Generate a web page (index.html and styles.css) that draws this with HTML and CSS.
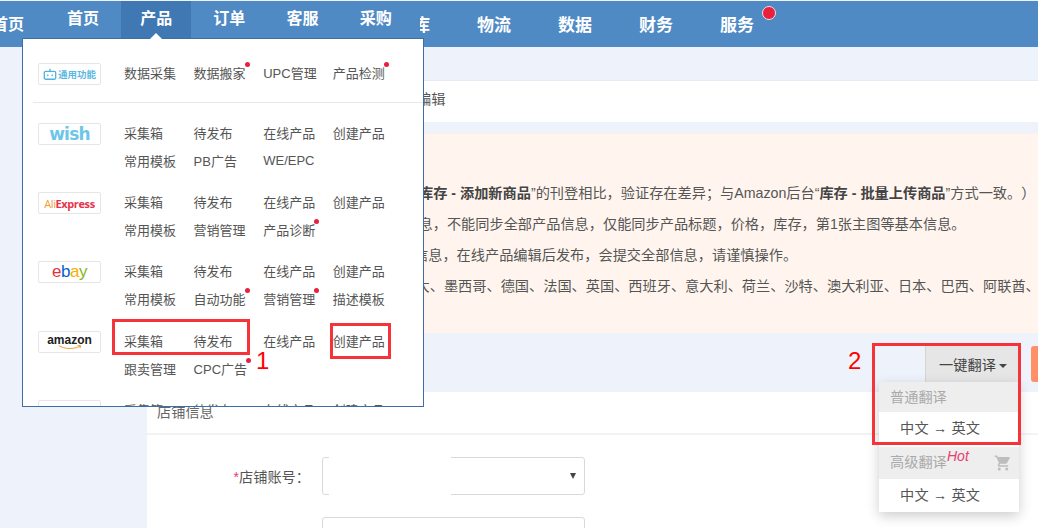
FILE: index.html
```html
<!DOCTYPE html>
<html lang="zh-CN">
<head>
<meta charset="utf-8">
<title>产品</title>
<link rel="stylesheet" href="styles.css">
</head>
<body>
<div class="page">
  <header class="nav">
    <a class="nav-cut">首页</a>
    <div class="nav-left">
      <a>首页</a>
      <a class="active">产品</a>
      <a>订单</a>
      <a>客服</a>
      <a>采购</a>
    </div>
    <div class="nav-right">
      <a>仓库</a>
      <a>物流</a>
      <a>数据</a>
      <a>财务</a>
      <a class="has-badge">服务</a>
    </div>
  </header>

  <main class="main">
    <div class="crumb"><span>编辑</span></div>
    <section class="notice">
      <p class="l1"><b>库存 - 添加新商品</b>”的刊登相比，验证存在差异；与Amazon后台“<b>库存 - 批量上传商品</b>”方式一致。）</p>
      <p class="l2">息，不能同步全部产品信息，仅能同步产品标题，价格，库存，第1张主图等基本信息。</p>
      <p class="l3">信息，在线产品编辑后发布，会提交全部信息，请谨慎操作。</p>
      <p class="l4">大、墨西哥、德国、法国、英国、西班牙、意大利、荷兰、沙特、澳大利亚、日本、巴西、阿联酋、</p>
    </section>
    <div class="toolbar">
      <div class="translate">
        <button class="btn-translate">一键翻译<i class="caret"></i></button>
        <div class="menu">
          <div class="menu-head">普通翻译</div>
          <div class="menu-item">中文 → 英文</div>
          <div class="menu-head second">高级翻译<em>Hot</em>
            <svg class="cart" viewBox="0 0 24 24" width="18" height="18"><path fill="#bdbdbd" d="M7 18a2 2 0 1 0 0 4 2 2 0 0 0 0-4zM1 2v2h2l3.6 7.6L5.2 14c-.1.3-.2.6-.2 1 0 1.100.9 2 2 2h12v-2H7.400a.25.25 0 0 1-.25-.25l.03-.12L8.100 13h7.450c.75 0 1.410-.41 1.750-1.030L20.880 5.500A1 1 0 0 0 20 4H5.210l-.94-2H1zm16 16a2 2 0 1 0 0 4 2 2 0 0 0 0-4z"/></svg>
          </div>
          <div class="menu-item">中文 → 英文</div>
        </div>
      </div>
      <button class="btn-orange"></button>
    </div>
    <section class="card">
      <div class="card-head">店铺信息</div>
      <div class="form">
        <div class="form-row">
          <label><i>*</i>店铺账号：</label>
          <div class="select"><span class="mask"></span><i class="arrow"></i></div>
        </div>
        <div class="form-row">
          <label></label>
          <div class="select"></div>
        </div>
      </div>
    </section>
  </main>

  <div class="mega">
    <span class="mega-caret"></span>
    <div class="mega-body">
      <div class="row">
        <div class="logo logo-common">
          <svg viewBox="0 0 16 16" width="14" height="14"><path fill="none" stroke="#4fb3e0" stroke-width="1.500" d="M3 5h10a1.500 1.500 0 0 1 1.500 1.500v6a1.500 1.500 0 0 1-1.500 1.500H3a1.500 1.500 0 0 1-1.500-1.500v-6A1.500 1.500 0 0 1 3 5zM8 5V2"/><circle cx="5.500" cy="9.500" r="1" fill="#4fb3e0"/><circle cx="10.500" cy="9.500" r="1" fill="#4fb3e0"/></svg>
          <span>通用功能</span>
        </div>
        <div class="links">
          <a>数据采集</a><a class="dot">数据搬家</a><a>UPC管理</a><a class="dot">产品检测</a>
        </div>
      </div>
      <hr class="divider">
      <div class="row">
        <div class="logo logo-wish">wish</div>
        <div class="links">
          <a>采集箱</a><a>待发布</a><a>在线产品</a><a>创建产品</a>
          <a>常用模板</a><a>PB广告</a><a>WE/EPC</a>
        </div>
      </div>
      <div class="row">
        <div class="logo logo-ali"><span>Ali</span>Express</div>
        <div class="links">
          <a>采集箱</a><a>待发布</a><a>在线产品</a><a>创建产品</a>
          <a>常用模板</a><a>营销管理</a><a class="dot">产品诊断</a>
        </div>
      </div>
      <div class="row row-ebay">
        <div class="logo logo-ebay"><span class="e">e</span><span class="b">b</span><span class="a">a</span><span class="y">y</span></div>
        <div class="links">
          <a>采集箱</a><a>待发布</a><a>在线产品</a><a>创建产品</a>
          <a>常用模板</a><a class="dot">自动功能</a><a class="dot">营销管理</a><a>描述模板</a>
        </div>
      </div>
      <div class="row">
        <div class="logo logo-amazon">amazon
          <svg viewBox="0 0 40 8" width="26" height="5"><path fill="none" stroke="#f0a030" stroke-width="1.600" d="M2 1c10 6 24 6 34 1M32 1h5l-1 4"/></svg>
        </div>
        <div class="links">
          <a>采集箱</a><a>待发布</a><a>在线产品</a><a>创建产品</a>
          <a>跟卖管理</a><a class="dot">CPC广告</a>
        </div>
      </div>
      <div class="row">
        <div class="logo"></div>
        <div class="links">
          <a>采集箱</a><a>待发布</a><a>在线产品</a><a>创建产品</a>
        </div>
      </div>
    </div>
  </div>

  <span class="mark mark-a"></span>
  <span class="mark mark-b"></span>
  <span class="mark mark-c"></span>
  <span class="num num-1">1</span>
  <span class="num num-2">2</span>
</div>
</body>
</html>
```
FILE: styles.css
```css
* { box-sizing: border-box; }
html, body { margin: 0; padding: 0; }
body {
  background: #eef2fa;
  font-family: "Liberation Sans", "Noto Sans CJK SC", sans-serif;
  font-size: 14.200px;
  color: #555;
  text-spacing-trim: space-all;
}
.page { position: relative; width: 1038px; height: 528px; overflow: hidden; }

.nav {
  display: flex;
  height: 46px;
  margin-top: 1px;
  background: #4f8ac5;
  color: #fff;
  font-weight: 700;
  position: relative;
}
.nav a { display: block; }
.nav-cut { position: absolute; z-index: 2; left: -8px; top: 0; font-size: 16px; line-height: 48px; }
.nav-left {
  position: relative;
  z-index: 1;
  flex: none;
  display: flex;
  gap: 3.200px;
  width: 372px;
  margin-left: 48px;
  font-size: 16px;
  background: #4f8ac5;
}
.nav-left a { width: 70px; height: 37px; line-height: 35px; text-align: center; }
.nav-left a.active { background: #3f78b2; }
.nav-right { display: flex; margin-left: -47.500px; font-size: 17px; }
.nav-right a { width: 81px; height: 46px; line-height: 50px; text-align: center; position: relative; }
.has-badge::after {
  content: "";
  position: absolute;
  left: 65px;
  top: 5px;
  width: 12px;
  height: 12px;
  border-radius: 50%;
  background: #e8203c;
  border: 1px solid #f3dfe3;
}

.main { padding-left: 147px; }
.crumb {
  margin-top: 33px;
  height: 42px;
  background: #fff;
  border-top: 1px solid #e6eaf2;
  padding-left: 270px;
  line-height: 36px;
}
.notice {
  margin-top: 11px;
  height: 200px;
  background: #fff5ee;
  border-top: 1px solid #fdf0e6;
  padding-top: 44px;
  white-space: nowrap;
}
.notice p { margin: 0; height: 31px; line-height: 31px; }
.notice b { color: #444; }
.l1 { padding-left: 272px; }
.l2 { padding-left: 271.500px; }
.l3 { padding-left: 267px; }
.l4 { padding-left: 268.500px; }

.toolbar {
  display: flex;
  justify-content: flex-end;
  align-items: flex-start;
  height: 59px;
  padding-top: 13px;
  margin-right: -30px;
}
.translate { position: relative; margin-right: 11px; }
.btn-translate {
  display: block;
  width: 95px;
  height: 36px;
  background: #e6e6e6;
  border: 0;
  border-left: 1px solid #d4d4d4;
  padding: 0;
  font: inherit;
  color: #444;
}
.caret {
  display: inline-block;
  margin-left: 3px;
  vertical-align: middle;
  border: 4px solid transparent;
  border-top-color: #444;
  border-bottom: 0;
}
.btn-orange {
  width: 37px;
  height: 36px;
  background: #ff9068;
  border: 0;
  border-radius: 3px;
}
.menu {
  position: absolute;
  z-index: 3;
  right: 1px;
  top: 36px;
  width: 140px;
  background: #fff;
  box-shadow: 0 4px 12px rgba(0, 0, 0, .2);
}
.menu-head {
  position: relative;
  height: 30px;
  line-height: 30px;
  padding-left: 11px;
  background: #eee;
  color: #aaa;
}
.menu-head.second { margin-top: 2px; height: 32px; line-height: 30px; }
.menu-head em { position: absolute; left: 68px; top: -6px; color: #e83e6f; font-size: 14px; }
.cart { position: absolute; right: 7px; top: 7px; }
.menu-item {
  height: 33px;
  line-height: 33px;
  padding-left: 21px;
  color: #555;
  background: #fff;
  letter-spacing: .2px;
}

.card { background: #fff; height: 136px; }
.card-head {
  height: 43px;
  border-bottom: 2px solid #f2f3f5;
  padding-left: 10px;
  line-height: 40px;
  color: #666;
}
.form { padding-top: 22px; }
.form-row { display: flex; align-items: center; margin-bottom: 22px; }
.form-row label { width: 163px; text-align: right; color: #555; }
.form-row label i { color: #e83e6f; font-style: normal; }
.select {
  position: relative;
  width: 263px;
  height: 38px;
  margin-left: 12px;
  background: #fff;
  border: 1px solid #d9d9d9;
  border-radius: 3px;
}
.mask { position: absolute; left: 6px; top: -1px; width: 122px; height: 38px; background: #fff; }
.arrow {
  position: absolute;
  right: 8px;
  top: 15px;
  border: 3px solid transparent;
  border-top: 6px solid #444;
  border-bottom: 0;
}

.mega {
  position: absolute;
  z-index: 5;
  left: 22px;
  top: 38px;
  width: 402px;
  height: 369px;
  background: #fff;
  border: 1px solid #3d6fa5;
}
.mega-caret {
  position: absolute;
  left: 127px;
  top: -6px;
  border: 6px solid transparent;
  border-bottom-color: #fff;
  border-top: 0;
}
.mega-body { height: 100%; overflow: hidden; padding-top: 19px; font-size: 13px; }
.row { display: flex; margin-bottom: 13px; min-height: 28px; }
.row:first-child { margin-bottom: 0; }
.row-ebay { margin-bottom: 14px; }
.logo {
  flex: none;
  display: flex;
  align-items: center;
  justify-content: center;
  width: 63px;
  height: 22px;
  margin: 5px 23px 0 15px;
  border: 1px solid #e6e6e6;
  border-radius: 2px;
  background: #fff;
  white-space: nowrap;
}
.logo-common { font-size: 9.500px; font-weight: 700; color: #5ab7e2; gap: 1px; }
.logo-wish { font: 700 17px "DejaVu Sans", sans-serif; color: #6cc6ea; letter-spacing: -.8px; }
.logo-ali { font: 700 11px "Open Sans", sans-serif; color: #e8324a; letter-spacing: -.4px; }
.logo-ali span { color: #f39a3c; font-weight: 400; }
.logo-ebay { font: 400 17px "Liberation Sans", sans-serif; letter-spacing: -.5px; }
.logo-ebay .e { color: #e53238; }
.logo-ebay .b { color: #0064d2; }
.logo-ebay .a { color: #f5af02; }
.logo-ebay .y { color: #86b817; }
.logo-amazon {
  flex-direction: column;
  font: 700 12px/12px "Liberation Sans", sans-serif;
  color: #222;
}
.logo-amazon svg { display: block; margin-top: -1px; }
.links {
  display: grid;
  grid-template-columns: repeat(4, 69.600px);
  grid-auto-rows: 28px;
  align-items: center;
  justify-items: start;
  color: #555;
}
.links a { position: relative; white-space: nowrap; }
.dot::after {
  content: "";
  position: absolute;
  right: -4px;
  top: -1px;
  width: 5px;
  height: 5px;
  border-radius: 50%;
  background: #e8203c;
}
.divider {
  height: 1px;
  border: 0;
  margin: 16px 0 15px 10px;
  background: #e8e8e8;
}

.mark { position: absolute; z-index: 6; border: 3px solid #f53338; pointer-events: none; }
.mark-a { left: 112px; top: 319px; width: 138px; height: 36px; }
.mark-b { left: 330px; top: 323px; width: 61px; height: 36px; }
.mark-c { left: 872px; top: 343px; width: 149px; height: 102px; }
.num {
  position: absolute;
  z-index: 6;
  color: #f00;
  font: 24px/28px "Liberation Sans", sans-serif;
}
.num-1 { left: 256px; top: 347px; }
.num-2 { left: 848px; top: 347px; }
```
